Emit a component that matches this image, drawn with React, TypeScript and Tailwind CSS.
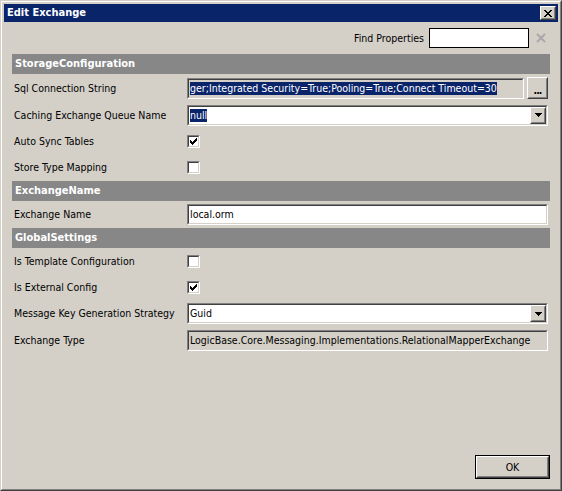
import type { ReactNode } from "react";

const FONT = "[font-family:'DejaVu_Sans_Condensed','DejaVu_Sans',sans-serif]";

// 经典 Win2000 凹陷边框
function Sunken({ className, children }: { className: string; children?: ReactNode }) {
  return (
    <div
      className={`border border-t-[#808080] border-l-[#808080] border-r-white border-b-white ${className}`}
    >
      <div className="h-full w-full border border-t-[#404040] border-l-[#404040] border-r-[#d4d0c8] border-b-[#d4d0c8] flex items-center overflow-hidden">
        {children}
      </div>
    </div>
  );
}

function Raised({ className, children }: { className: string; children?: ReactNode }) {
  return (
    <div
      className={`border border-t-white border-l-white border-r-[#404040] border-b-[#404040] ${className}`}
    >
      <div className="h-full w-full border border-t-[#d4d0c8] border-l-[#d4d0c8] border-r-[#808080] border-b-[#808080] bg-[#d4d0c8] flex items-center justify-center">
        {children}
      </div>
    </div>
  );
}

function Check({ on }: { on: boolean }) {
  return (
    <Sunken className="w-[13px] h-[13px]">
      <div className="w-full h-full bg-white flex items-center justify-center">
        {on && (
          <svg width="7" height="7" viewBox="0 0 7 7" shapeRendering="crispEdges">
            <rect x="6" y="0" width="1" height="3" fill="#000" />
            <rect x="5" y="1" width="1" height="3" fill="#000" />
            <rect x="4" y="2" width="1" height="3" fill="#000" />
            <rect x="3" y="3" width="1" height="3" fill="#000" />
            <rect x="2" y="4" width="1" height="3" fill="#000" />
            <rect x="1" y="3" width="1" height="3" fill="#000" />
            <rect x="0" y="2" width="1" height="3" fill="#000" />
          </svg>
        )}
      </div>
    </Sunken>
  );
}

function Combo({ children }: { children: ReactNode }) {
  return (
    <Sunken className="w-[361px] h-[21px]">
      <div className="flex-1 h-full bg-white flex items-center pl-[1px] pt-[1px]">{children}</div>
      <Raised className="w-[16px] h-full">
        <svg width="7" height="4" viewBox="0 0 7 4" shapeRendering="crispEdges">
          <polygon points="0,0 7,0 3.5,4" fill="#000" />
        </svg>
      </Raised>
    </Sunken>
  );
}

function Header({ title }: { title: string }) {
  return (
    <div className="h-[20px] bg-[#878787] flex items-center pl-[3px] pt-[1px] text-white font-bold text-[11px]">
      {title}
    </div>
  );
}

function Row({ label, h, children }: { label: string; h: string; children: ReactNode }) {
  return (
    <div className={`flex items-center ${h}`}>
      <div className="w-[175px] pl-[2px] pt-[1px] text-black">{label}</div>
      {children}
    </div>
  );
}

const Sel = ({ t }: { t: string }) => (
  <span className="bg-[#0a246a] text-white leading-[13px] whitespace-nowrap">{t}</span>
);

export default function App() {
  return (
    <div className={`w-[562px] h-[491px] ${FONT} text-[10.5px] text-black`}>
      <div className="w-full h-full border border-t-[#d4d0c8] border-l-[#d4d0c8] border-r-[#404040] border-b-[#404040]">
        <div className="w-full h-full border border-t-white border-l-white border-r-[#808080] border-b-[#808080] bg-[#d4d0c8] p-[2px] flex flex-col">
          {/* 标题栏 */}
          <div className="h-[18px] bg-[#0a246a] flex items-center pl-[3px] pr-[2px] shrink-0">
            <span className="text-white font-bold text-[11px] flex-1">Edit Exchange</span>
            <Raised className="w-[16px] h-[14px]">
              <svg width="8" height="7" viewBox="0 0 8 7" shapeRendering="crispEdges">
                <path d="M0 0h2v1h-2zM6 0h2v1h-2zM1 1h2v1h-2zM5 1h2v1h-2zM2 2h4v1h-4zM3 3h2v1h-2zM2 4h4v1h-4zM1 5h2v1h-2zM5 5h2v1h-2zM0 6h2v1h-2zM6 6h2v1h-2z" fill="#000" />
              </svg>
            </Raised>
          </div>

          <div className="flex-1 flex flex-col px-[8px]">
            {/* Find Properties */}
            <div className="mt-[6px] h-[20px] flex items-center justify-end">
              <span className="mr-[5px] pt-[1px]">Find Properties</span>
              <div className="w-[100px] h-[20px] bg-white border border-black" />
              <svg className="ml-[6px] mr-[3px]" width="12" height="12" viewBox="0 0 12 12">
                <path d="M2 2L10 10M10 2L2 10" stroke="#a8a8a8" strokeWidth="2" />
              </svg>
            </div>

            <div className="mt-[6px] flex flex-col">
              <Header title="StorageConfiguration" />
              <Row label="Sql Connection String" h="h-[28px]">
                <Sunken className="w-[337px] h-[21px]">
                  <div className="pl-[1px] pt-[1px] h-full flex items-center">
                    <Sel t="ger;Integrated Security=True;Pooling=True;Connect Timeout=30" />
                  </div>
                </Sunken>
                <Raised className="ml-[3px] w-[21px] h-[22px]">
                  <span className="font-bold leading-none mt-[4px] tracking-[-1px]">...</span>
                </Raised>
              </Row>
              <Row label="Caching Exchange Queue Name" h="h-[26px]">
                <Combo>
                  <Sel t="null" />
                </Combo>
              </Row>
              <Row label="Auto Sync Tables" h="h-[26px]">
                <Check on />
              </Row>
              <Row label="Store Type Mapping" h="h-[27px]">
                <Check on={false} />
              </Row>

              <Header title="ExchangeName" />
              <Row label="Exchange Name" h="h-[27px]">
                <Sunken className="w-[361px] h-[21px]">
                  <div className="w-full h-full bg-white flex items-center pl-[1px] pt-[1px]">local.orm</div>
                </Sunken>
              </Row>

              <Header title="GlobalSettings" />
              <Row label="Is Template Configuration" h="h-[26px]">
                <Check on={false} />
              </Row>
              <Row label="Is External Config" h="h-[26px]">
                <Check on />
              </Row>
              <Row label="Message Key Generation Strategy" h="h-[27px]">
                <Combo>Guid</Combo>
              </Row>
              <Row label="Exchange Type" h="h-[26px]">
                <Sunken className="w-[361px] h-[21px]">
                  <div className="pl-[1px] pt-[1px] whitespace-nowrap">
                    LogicBase.Core.Messaging.Implementations.RelationalMapperExchange
                  </div>
                </Sunken>
              </Row>
            </div>

            <div className="flex-1" />
            <div className="flex justify-end mb-[8px]">
              <div className="w-[75px] h-[24px] border border-black">
                <Raised className="w-full h-full">
                  <span className="pt-[1px]">OK</span>
                </Raised>
              </div>
            </div>
          </div>
        </div>
      </div>
    </div>
  );
}
